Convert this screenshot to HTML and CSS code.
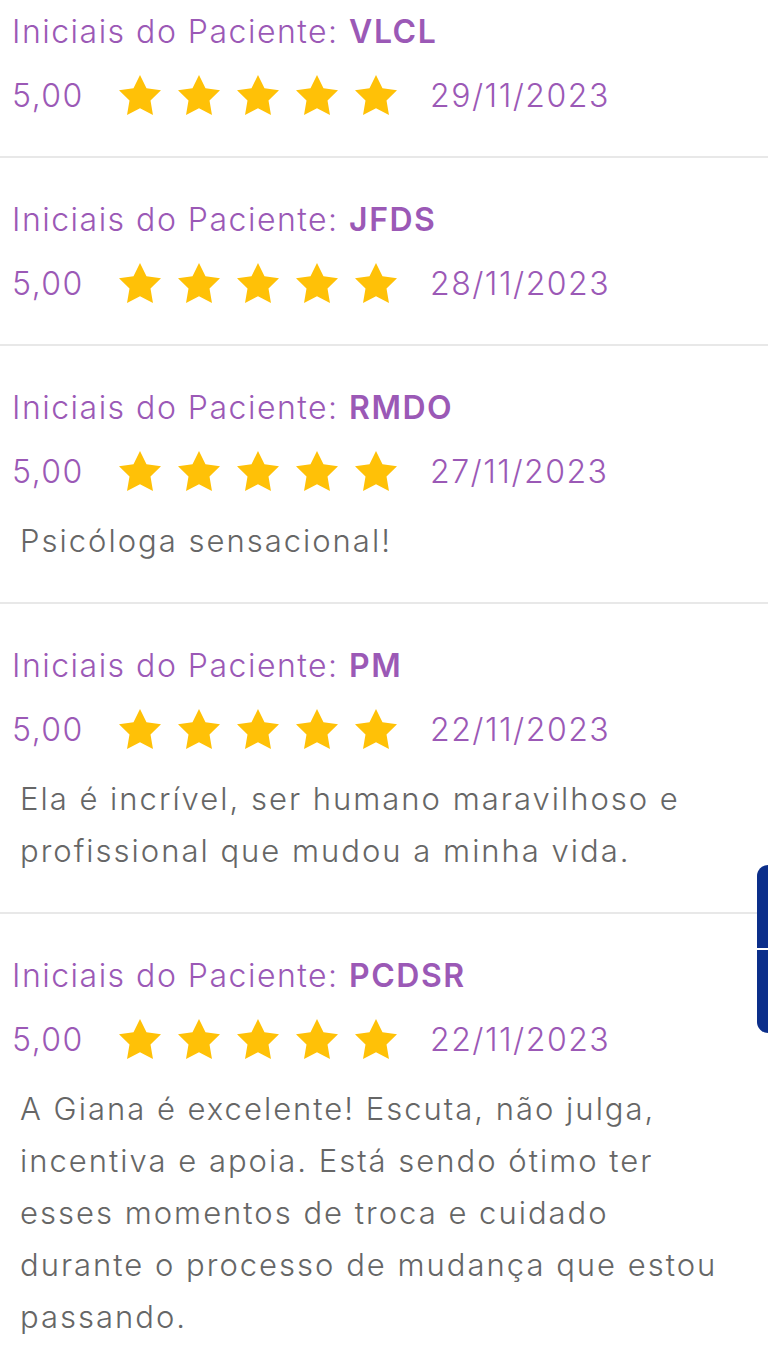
FILE: index.html
```html
<!DOCTYPE html>
<html lang="pt-BR">
<head>
    <meta charset="UTF-8">
    <meta name="viewport" content="width=device-width, initial-scale=1.0">
    <title>Avaliações</title>
    <link rel="stylesheet" href="styles.css">
</head>
<body>
    <section class="avaliacoes">
        <div class="avaliacao">
            <h3 class="paciente">Iniciais do Paciente: <strong>VLCL</strong></h3>
            <div class="nota">
                <span class="valor">5,00</span>
                <span class="estrelas"></span>
                <span class="data">29/11/2023</span>
            </div>
        </div>

        <div class="avaliacao">
            <h3 class="paciente">Iniciais do Paciente: <strong>JFDS</strong></h3>
            <div class="nota">
                <span class="valor">5,00</span>
                <span class="estrelas"></span>
                <span class="data">28/11/2023</span>
            </div>
        </div>

        <div class="avaliacao">
            <h3 class="paciente">Iniciais do Paciente: <strong>RMDO</strong></h3>
            <div class="nota">
                <span class="valor">5,00</span>
                <span class="estrelas"></span>
                <span class="data">27/11/2023</span>
            </div>
            <p class="comentario">Psicóloga sensacional!</p>
        </div>

        <div class="avaliacao">
            <h3 class="paciente">Iniciais do Paciente: <strong>PM</strong></h3>
            <div class="nota">
                <span class="valor">5,00</span>
                <span class="estrelas"></span>
                <span class="data">22/11/2023</span>
            </div>
            <p class="comentario">Ela é incrível, ser humano maravilhoso e profissional que mudou a minha vida.</p>
        </div>

        <div class="avaliacao">
            <h3 class="paciente">Iniciais do Paciente: <strong>PCDSR</strong></h3>
            <div class="nota">
                <span class="valor">5,00</span>
                <span class="estrelas"></span>
                <span class="data">22/11/2023</span>
            </div>
            <p class="comentario">A Giana é excelente! Escuta, não julga, incentiva e apoia. Está sendo ótimo ter esses momentos de troca e cuidado durante o processo de mudança que estou passando.</p>
        </div>
    </section>

    <!-- aba lateral fixa -->
    <div class="aba-lateral">
        <span class="aba-parte"></span>
        <span class="aba-parte"></span>
    </div>

    <script>
        // desenha as 5 estrelas de cada avaliação
        const estrela = '<svg viewBox="2 2 20 19.02" width="42" height="40"><polygon fill="#FFC107" points="12,2 15.09,8.26 22,9.27 17,14.14 18.18,21.02 12,17.77 5.82,21.02 7,14.14 2,9.27 8.91,8.26"/></svg>';
        document.querySelectorAll('.estrelas').forEach(function (el) {
            el.innerHTML = estrela.repeat(5);
        });
    </script>
</body>
</html>
```

FILE: styles.css
```css
body {
    margin: 0;
    padding: 0;
    background-color: #ffffff;
    font-family: Inter, "Noto Sans", sans-serif;
    font-weight: 300;
    color: #9b59b6;
}

.avaliacoes {
    display: flex;
    flex-direction: column;
}

.avaliacao {
    padding: 40px 32px 30px 12px;
    border-bottom: 2px solid #e8e8e8; /* linha divisória */
}

.avaliacao:first-child {
    padding-top: 10px;
}

.avaliacao:last-child {
    border-bottom: none;
}

.paciente {
    margin: 0;
    font-size: 32px;
    font-weight: 300;
    letter-spacing: 1.5px;
    line-height: 44px;
    color: #9b59b6;
}

.paciente strong {
    font-weight: 600;
}

.nota {
    display: flex;
    align-items: center;
    height: 44px;
    margin-top: 19px;
    margin-bottom: 9px;
    font-size: 32px;
    letter-spacing: 1.5px;
}

.valor {
    width: 107px;
}

.estrelas {
    display: flex;
    gap: 17px;
}

.estrelas svg {
    display: block;
}

.data {
    margin-left: 33px;
}

.comentario {
    margin: 22px 0 5px 8px;
    font-size: 31px;
    letter-spacing: 2px;
    line-height: 52px;
    color: #666666;
}

.aba-lateral {
    position: absolute;
    top: 865px;
    right: 0;
    width: 11px;
    height: 168px;
    display: flex;
    flex-direction: column;
    gap: 2px;
}

.aba-parte {
    flex: 1;
    background-color: #0b2e8a;
}

.aba-parte:first-child {
    border-top-left-radius: 14px;
}

.aba-parte:last-child {
    border-bottom-left-radius: 14px;
}
```
